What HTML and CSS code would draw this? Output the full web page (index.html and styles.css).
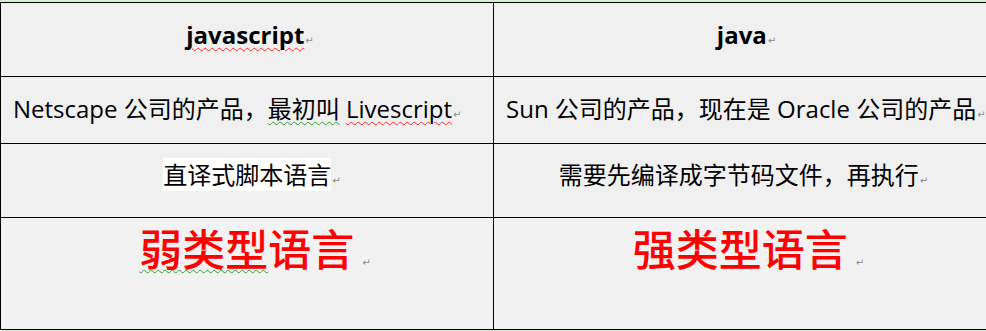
FILE: index.html
```html
<!DOCTYPE html>
<html lang="zh-CN">
<head>
<meta charset="utf-8">
<title>javascript vs java</title>
<link rel="stylesheet" href="styles.css">
</head>
<body>
<div class="table">
  <div class="cell head r1"><span class="sp-red">javascript</span><span class="pm">↵</span></div>
  <div class="cell head r1">java<span class="pm">↵</span></div>

  <div class="cell left r2">Netscape 公司的产品，<span class="sp-green">最初叫</span> <span class="sp-red">Livescript</span><span class="pm">↵</span></div>
  <div class="cell left r2">Sun 公司的产品，现在是 Oracle 公司的产品<span class="pm">↵</span></div>

  <div class="cell center r3 shift"><span class="hl">直译式脚本语言</span><span class="pm">↵</span></div>
  <div class="cell center r3">需要先编译成字节码文件，再执行<span class="pm">↵</span></div>

  <div class="cell center r4 shift-big"><span class="big"><span class="sp-green">弱类型</span>语言</span><span class="pm pm-big">↵</span></div>
  <div class="cell center r4 shift-big-r"><span class="big">强类型语言</span><span class="pm pm-big">↵</span></div>
</div>
</body>
</html>
```

FILE: styles.css
```css
html, body {
  margin: 0;
  padding: 0;
  background: #d8efd3;
  overflow: hidden;
}

body {
  width: 986px;
  height: 331px;
  padding-top: 2px;
  box-sizing: border-box;
}

.table {
  display: grid;
  grid-template-columns: 493px 500px;
  grid-template-rows: 74px 67px 74px 112px;
  border-top: 1px solid #000;
  border-left: 1px solid #000;
  width: 993px;
  font-family: "Open Sans", "Noto Sans CJK SC", sans-serif;
  font-size: 24px;
  line-height: 34px;
  color: #000;
}

.cell {
  background: #f0f0f0;
  border-right: 1px solid #000;
  border-bottom: 1px solid #000;
  white-space: nowrap;
}

.head {
  text-align: center;
  font-weight: 700;
  padding-top: 15px;
  padding-left: 6px;
}

.left {
  text-align: left;
  padding-left: 12px;
  padding-top: 15px;
}

.center {
  text-align: center;
}

.shift {
  padding-left: 10px;
}

.shift-big {
  padding-left: 16px;
}

.shift-big-r {
  padding-left: 10px;
}

.r3 {
  padding-top: 14px;
}

.r4 {
  padding-top: 2px;
  background: #f2f2f2;
}

.hl {
  background: #ffffff;
}

.big {
  font-size: 43px;
  line-height: 60px;
  font-weight: 500;
  color: #ff0000;
}

.pm {
  font-family: "DejaVu Sans", sans-serif;
  font-size: 10px;
  font-weight: 400;
  color: #8a8a8a;
  margin-left: 1px;
}

.pm-big {
  margin-left: 8px;
}

.sp-red {
  text-decoration: underline wavy #ff2a2a;
  text-decoration-thickness: 1px;
  text-underline-offset: 3px;
}

.sp-green {
  text-decoration: underline wavy #2ea12e;
  text-decoration-thickness: 1px;
  text-underline-offset: 3px;
}
```
